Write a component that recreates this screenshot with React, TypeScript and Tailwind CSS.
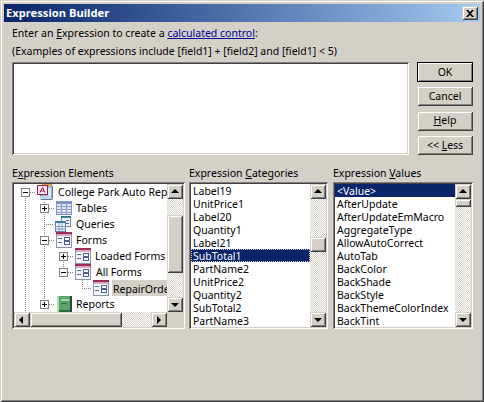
import React from "react";

const raised = "shadow-[inset_1px_1px_#d4d0c8,inset_-1px_-1px_#404040,inset_2px_2px_#ffffff,inset_-2px_-2px_#808080]";
const sunken = "shadow-[inset_1px_1px_#808080,inset_-1px_-1px_#ffffff,inset_2px_2px_#404040,inset_-2px_-2px_#d4d0c8]";
const dither = "bg-[repeating-conic-gradient(#d4d0c8_0_25%,#ffffff_0_50%)] bg-[length:2px_2px]";

function Arrow({ dir }: { dir: "up" | "down" | "left" | "right" }) {
  const pts = { up: "4,1 0,5 8,5 ", down: "0,2 8,2 4,6", left: "5,0 5,8 1,4", right: "2,0 2,8 6,4" }[dir];
  return (
    <svg width="8" height="8" viewBox="0 0 8 8">
      <polygon points={pts} fill="#000" />
    </svg>
  );
}

function SBtn({ dir }: { dir: "up" | "down" | "left" | "right" }) {
  return (
    <div className={`w-[16px] h-[15px] shrink-0 flex items-center justify-center bg-[#d4d0c8] ${raised}`}>
      <Arrow dir={dir} />
    </div>
  );
}

function VBar({ before, thumb }: { before: string; thumb: string }) {
  return (
    <div className="w-[16px] shrink-0 flex flex-col">
      <SBtn dir="up" />
      <div className={`${before} shrink-0 ${dither}`} />
      <div className={`${thumb} shrink-0 bg-[#d4d0c8] ${raised}`} />
      <div className={`flex-1 ${dither}`} />
      <SBtn dir="down" />
    </div>
  );
}

function ListBox({ items, selected, focus, className, before, thumb }: { items: string[]; selected: string; focus?: boolean; className: string; before: string; thumb: string }) {
  return (
    <div className={`${className} h-[147px] p-[2px] flex bg-white ${sunken}`}>
      <div className="flex-1 min-w-0 overflow-hidden">
        {items.map((t) => (
          <div
            key={t}
            className={`h-[13px] leading-[15px] pl-[2px] whitespace-nowrap ${t === selected ? "bg-[#0a246a] text-white" : ""} ${t === selected && focus ? "outline-1 outline-dotted -outline-offset-1 outline-[#d4d0c8]" : ""}`}
          >
            {t}
          </div>
        ))}
      </div>
      <VBar before={before} thumb={thumb} />
    </div>
  );
}

function Btn({ label, def }: { label: React.ReactNode; def?: boolean }) {
  return (
    <div className={`h-[20px] pt-[1px] w-[56px] flex items-center justify-center bg-[#d4d0c8] ${def ? "border border-black shadow-[inset_1px_1px_#ffffff,inset_-1px_-1px_#808080]" : raised}`}>
      {label}
    </div>
  );
}

function Exp({ open }: { open?: boolean }) {
  return (
    <svg width="9" height="9" viewBox="0 0 9 9" className="shrink-0">
      <rect x="0.5" y="0.5" width="8" height="8" fill="#fff" stroke="#808080" />
      <rect x="2" y="4" width="5" height="1" fill="#000" />
      {!open && <rect x="4" y="2" width="1" height="5" fill="#000" />}
    </svg>
  );
}

function FormIcon() {
  return (
    <svg width="16" height="16" viewBox="0 0 16 16" className="shrink-0">
      <rect x="0.5" y="0.5" width="15" height="15" fill="#f4f6fb" stroke="#8a93ad" />
      <rect x="0" y="0" width="16" height="2" fill="#9a2c5c" />
      <rect x="1" y="2" width="14" height="2" fill="#d9a8bc" />
      <rect x="2" y="6" width="4" height="1" fill="#5a6a90" />
      <rect x="2" y="10" width="4" height="1" fill="#5a6a90" />
      <rect x="8.500" y="5.500" width="5" height="3" fill="#fff" stroke="#4d5f8c" />
      <rect x="8.500" y="9.500" width="5" height="3" fill="#fff" stroke="#4d5f8c" />
    </svg>
  );
}

function TableIcon() {
  return (
    <svg width="16" height="14" viewBox="0 0 16 14" className="shrink-0">
      <rect x="0.5" y="0.5" width="15" height="13" fill="#dfe6f5" stroke="#7f8fc0" />
      <rect x="0" y="0" width="16" height="3" fill="#7f8fc4" />
      <path d="M5.500 0v14M10.500 0v14M0 5.500h16M0 8.500h16M0 11.500h16" stroke="#8c9ccc" />
    </svg>
  );
}

function QueryIcon() {
  return (
    <svg width="16" height="16" viewBox="0 0 16 16" className="shrink-0">
      <rect x="6.500" y="0.5" width="9" height="10" fill="#f2f6fa" stroke="#5f8f9f" />
      <rect x="6" y="0" width="10" height="2" fill="#2f7f8f" />
      <rect x="11" y="4" width="3" height="1" fill="#5a6a90" />
      <rect x="11" y="7" width="3" height="1" fill="#5a6a90" />
      <rect x="0.5" y="5.500" width="10" height="10" fill="#f2f6fa" stroke="#5f7fa8" />
      <rect x="0" y="5" width="11" height="2" fill="#3f79a8" />
      <path d="M4 7v9M7 7v9M0 10.500h11M0 13h11" stroke="#7d9cc2" />
    </svg>
  );
}

function ReportIcon() {
  return (
    <svg width="15" height="16" viewBox="0 0 15 16" className="shrink-0">
      <rect x="0" y="0" width="15" height="16" fill="#5fa36c" />
      <rect x="0" y="0" width="2" height="16" fill="#b8dcb8" />
      <rect x="13" y="0" width="2" height="16" fill="#2b4a32" />
      <rect x="2" y="14" width="11" height="2" fill="#2d6a3c" />
      <rect x="4" y="3" width="8" height="2" fill="#a8d4a8" />
      <rect x="4" y="7" width="6" height="1" fill="#2f7a42" />
    </svg>
  );
}

function DbIcon() {
  return (
    <svg width="16" height="16" viewBox="0 0 16 16" className="shrink-0">
      <rect x="3.500" y="1.500" width="12" height="14" rx="1" fill="#9db4d6" stroke="#5c78a6" />
      <rect x="5" y="0" width="10" height="2" fill="#e0a040" />
      <rect x="11" y="4" width="3" height="8" fill="#dfe6f5" />
      <rect x="3" y="12" width="11" height="3" fill="#c8d4e8" />
      <rect x="0.5" y="1.500" width="10" height="9" fill="#f7e8f0" stroke="#a01850" />
      <path d="M3 8.500 5.500 3.500 8 8.500M4 7h3" fill="none" stroke="#a01850" />
    </svg>
  );
}

function Row({ indent, children }: { indent: string; children: React.ReactNode }) {
  return <div className={`h-[16px] flex items-center whitespace-nowrap ${indent}`}>{children}</div>;
}

function TreeLines() {
  const d = "M11.500 12V128 M30.500 18V120 M49.500 72V88 M68.500 96V104 M16 8.500h5 M35 24.500h5 M30 40.500h10 M35 56.500h5 M54 72.500h5 M54 88.500h5 M68 104.500h10 M35 120.500h5";
  return (
    <svg width="153" height="128" viewBox="0 0 153 128" className="absolute left-0 top-0 pointer-events-none">
      <path d={d} fill="none" stroke="#808080" strokeDasharray="1 1" />
    </svg>
  );
}

const cats = ["Label19","UnitPrice1","Label20","Quantity1","Label21","SubTotal1","PartName2","UnitPrice2","Quantity2","SubTotal2","PartName3"];
const vals = ["<Value>","AfterUpdate","AfterUpdateEmMacro","AggregateType","AllowAutoCorrect","AutoTab","BackColor","BackShade","BackStyle","BackThemeColorIndex","BackTint"];

export default function App() {
  return (
    <div className={`w-[484px] h-[402px] bg-[#d4d0c8] p-[4px] text-black text-[10.5px] font-['Noto_Sans','Liberation_Sans',sans-serif] ${raised}`}>
      <div className="h-[18px] flex items-center justify-between pl-[2px] pr-[2px] bg-gradient-to-r from-[#0a246a] to-[#a6caf0] text-white font-bold text-[11.2px]">
        <span>Expression Builder</span>
        <div className={`w-[16px] h-[14px] flex items-center justify-center bg-[#d4d0c8] ${raised}`}>
          <svg width="8" height="7" viewBox="0 0 8 7"><path d="M0 0h2l2 2 2-2h2L5 3.500 8 7H6L4 5 2 7H0l3-3.500z" fill="#000" /></svg>
        </div>
      </div>
      <div className="pl-[8px] pr-[7px]">
        <div className="h-[17px] mt-[3px] leading-[17px]">
          Enter an <span className="underline">E</span>xpression to create a <span className="underline text-[#0000a0]">calculated control</span>:
        </div>
        <div className="h-[17px] leading-[19px]">(Examples of expressions include [field1] + [field2] and [field1] &lt; 5)</div>
        <div className="mt-[3px] flex justify-between h-[93px]">
          <div className={`w-[397px] bg-white ${sunken}`} />
          <div className="w-[56px] flex flex-col justify-between">
            <Btn label="OK" def />
            <Btn label="Cancel" />
            <Btn label={<span><span className="underline">H</span>elp</span>} />
            <Btn label={<span>&lt;&lt; <span className="underline">L</span>ess</span>} />
          </div>
        </div>
        <div className="mt-[10px] h-[17px] flex leading-[17px]">
          <div className="w-[177px]">E<span className="underline">x</span>pression Elements</div>
          <div className="w-[144px]">Expression <span className="underline">C</span>ategories</div>
          <div>Expression <span className="underline">V</span>alues</div>
        </div>
        <div className="flex">
          <div className={`w-[173px] h-[147px] p-[2px] bg-white flex flex-col ${sunken}`}>
            <div className="flex h-[128px]">
              <div className="relative w-[153px] overflow-hidden">
                <TreeLines />
                <div className="relative">
                  <Row indent="pl-[7px]"><Exp open /><span className="w-[7px] shrink-0" /><DbIcon /><span className="ml-[5px] pt-[2px]">College Park Auto Repairs</span></Row>
                  <Row indent="pl-[26px]"><Exp /><span className="w-[7px] shrink-0" /><TableIcon /><span className="ml-[4px] pt-[2px]">Tables</span></Row>
                  <Row indent="pl-[41px]"><QueryIcon /><span className="ml-[5px] pt-[2px]">Queries</span></Row>
                  <Row indent="pl-[26px]"><Exp open /><span className="w-[7px] shrink-0" /><FormIcon /><span className="ml-[4px] pt-[2px]">Forms</span></Row>
                  <Row indent="pl-[45px]"><Exp /><span className="w-[7px] shrink-0" /><FormIcon /><span className="ml-[4px] pt-[2px]">Loaded Forms</span></Row>
                  <Row indent="pl-[45px]"><Exp open /><span className="w-[7px] shrink-0" /><FormIcon /><span className="ml-[5px] pt-[2px]">All Forms</span></Row>
                  <Row indent="pl-[79px]"><FormIcon /><span className="ml-[3px] pl-[1px] w-[60px] bg-[#d4d0c8] h-[16px] leading-[18px] shrink-0">RepairOrder</span></Row>
                  <Row indent="pl-[26px]"><Exp /><span className="w-[8px] shrink-0" /><ReportIcon /><span className="ml-[4px] pt-[2px]">Reports</span></Row>
                </div>
              </div>
              <VBar before="h-[16px]" thumb="h-[58px]" />
            </div>
            <div className="flex h-[15px]">
              <SBtn dir="left" />
              <div className={`w-[92px] bg-[#d4d0c8] ${raised}`} />
              <div className={`w-[29px] ${dither}`} />
              <SBtn dir="right" />
              <div className="w-[16px] bg-[#d4d0c8]" />
            </div>
          </div>
          <ListBox className="ml-[4px] w-[139px]" items={cats} selected="SubTotal1" focus before="h-[38px]" thumb="h-[15px]" />
          <ListBox className="ml-[5px] w-[140px]" items={vals} selected="<Value>" before="h-[0px]" thumb="h-[8px]" />
        </div>
      </div>
    </div>
  );
}
